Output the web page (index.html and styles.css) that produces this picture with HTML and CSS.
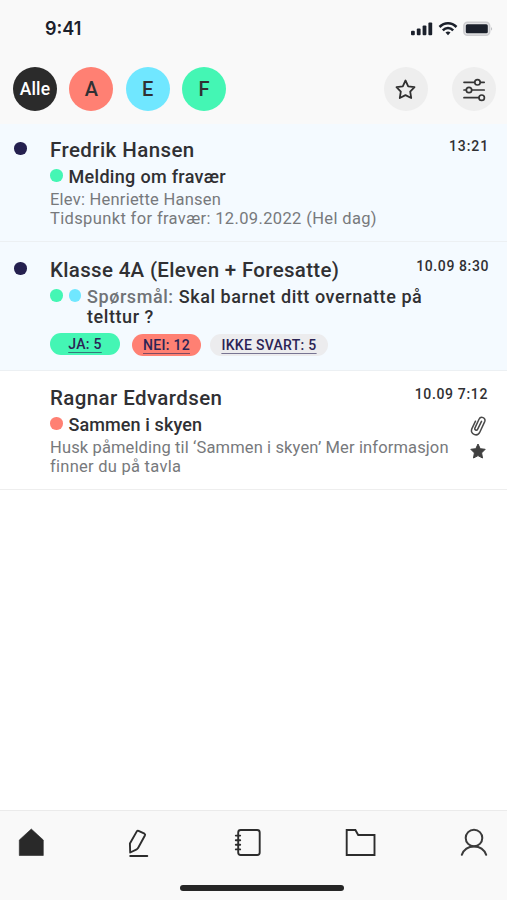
FILE: index.html
```html
<!DOCTYPE html>
<html lang="no">
<head>
<meta charset="utf-8">
<title>Meldinger</title>
<link rel="stylesheet" href="styles.css">
</head>
<body>
<div class="app">
  <header class="header">
    <div class="status">
      <span class="clock">9:41</span>
      <svg class="status-icons" width="82" height="16" viewBox="0 0 82 16">
        <g fill="#1b202b"><rect x="0" y="9.800" width="3.800" height="4.400" rx="1"/><rect x="5.800" y="7.600" width="3.800" height="6.600" rx="1"/><rect x="11.600" y="4.600" width="3.800" height="9.600" rx="1"/><rect x="17.400" y="1.400" width="3.800" height="12.800" rx="1"/></g>
        <g fill="none" stroke="#1b202b" stroke-width="2.500"><path d="M28.500 6C33.500 .9 40.500 .9 45.500 6"/><path d="M31.800 9.300C34.800 6.300 39.200 6.300 42.200 9.300"/></g>
        <path d="M34.500 11.500Q37 9.700 39.500 11.500L37 14.300Z" fill="#1b202b"/>
        <rect x="52.900" y="1.200" width="25.700" height="13" rx="3.500" fill="#e4e4e6" stroke="#cdcdd0" stroke-width="1.600"/>
        <rect x="54.800" y="3.200" width="22" height="9" rx="1.500" fill="#1b202b"/>
        <path d="M80.200 5.700Q82 7.700 80.200 9.700Z" fill="#aeb0b5"/>
      </svg>
    </div>
    <div class="filters">
      <span class="chip all">Alle</span>
      <span class="chip red">A</span>
      <span class="chip blue">E</span>
      <span class="chip green">F</span>
      <span class="round star"><svg width="44" height="44" viewBox="0 0 44 44"><path d="M21.500 13.500L24.200 19.300L30.500 20.100L26.200 24.600L27.200 31L21.500 28.100L15.800 31L16.800 24.600L12.500 20.100L18.800 19.300Z" fill="none" stroke="#303030" stroke-width="1.800" stroke-linejoin="round"/></svg></span>
      <span class="round sliders"><svg width="44" height="44" viewBox="0 0 44 44"><g fill="#eee" stroke="#353535" stroke-width="1.700" stroke-linecap="round"><path d="M12 15.300H32.200M12 23H32.200M12 30.700H32.200"/><circle cx="25.500" cy="15.300" r="2.700"/><circle cx="17" cy="23" r="2.700"/><circle cx="29.700" cy="30.700" r="2.700"/></g></svg></span>
    </div>
  </header>

  <main>
    <article class="message unread first">
      <i class="dot navy"></i>
      <div class="content">
        <div class="top"><h2 class="n1">Fredrik Hansen</h2><time class="t1">13:21</time></div>
        <div class="subject"><i class="dot green"></i><p class="s1">Melding om fravær</p></div>
        <p class="detail"><span class="d1">Elev: Henriette Hansen</span><br><span class="d2">Tidspunkt for fravær: 12.09.2022 (Hel dag)</span></p>
      </div>
    </article>
    <article class="message unread second">
      <i class="dot navy"></i>
      <div class="content">
        <div class="top"><h2 class="n2">Klasse 4A (Eleven + Foresatte)</h2><time class="t2">10.09 8:30</time></div>
        <div class="subject"><i class="dot green"></i><i class="dot blue"></i><p class="s2"><span class="label">Spørsmål:</span> Skal barnet ditt overnatte på<br>telttur ?</p></div>
        <div class="answers"><span class="pill yes"><u>JA: 5</u></span><span class="pill no"><u>NEI: 12</u></span><span class="pill none"><u>IKKE SVART: 5</u></span></div>
      </div>
    </article>
    <article class="message third">
      <i class="dot"></i>
      <div class="content">
        <div class="top"><h2 class="n3">Ragnar Edvardsen</h2><time class="t3">10.09 7:12</time></div>
        <div class="body">
          <div>
            <div class="subject"><i class="dot red"></i><p class="s3">Sammen i skyen</p></div>
            <p class="detail"><span class="d3">Husk påmelding til ‘Sammen i skyen’ Mer informasjon</span><br><span class="d4">finner du på tavla</span></p>
          </div>
          <div class="marks">
            <svg width="18" height="22" viewBox="0 0 18 22"><path d="M12.500 6.300L8.700 14.100C7.700 16.100 5.100 14.900 6 12.900L10 4.300C11.700 .5 17.300 2.900 15.700 6.600L10.900 17C8.400 22.400 .5 19.200 2.900 13.600L6.500 6.200" fill="none" stroke="#484848" stroke-width="1.500" stroke-linecap="round"/></svg>
            <svg width="18" height="18" viewBox="0 0 18 18"><path d="M9 2L11.200 6.700L16.200 7.300L12.600 10.900L13.500 16L9 13.600L4.500 16L5.400 10.900L1.800 7.300L6.800 6.700Z" fill="#404040" stroke="#404040" stroke-linejoin="round"/></svg>
          </div>
        </div>
      </div>
    </article>
  </main>

  <footer class="footer">
    <nav class="tabs">
      <svg width="32" height="32" viewBox="0 0 32 32"><path d="M16.300 3L28.300 14V29.500H4.300V14Z" fill="#292929" stroke="#292929" stroke-width=".6" stroke-linejoin="round"/></svg>
      <svg width="32" height="32" viewBox="0 0 32 32"><g fill="none" stroke="#2d2d2d" stroke-width="1.900" stroke-linecap="round" stroke-linejoin="round"><path d="M16.500 4.800L22.500 7.700Q23.500 8.300 22.900 9.500L16.200 21.700Q15.500 23 14.200 23.600L8.200 26.500L7.900 17.500L14.800 5.400Q15.500 4.300 16.500 4.800Z"/><path d="M8.200 30H25.300"/></g></svg>
      <svg width="32" height="32" viewBox="0 0 32 32"><g fill="none" stroke="#2d2d2d" stroke-width="1.900" stroke-linecap="round"><rect x="7.200" y="4" width="21.500" height="25" rx="2.500"/><path d="M4.800 9.600H9.200M4.800 14.200H9.200M4.800 18.800H9.200M4.800 23.400H9.200"/></g></svg>
      <svg width="32" height="32" viewBox="0 0 32 32"><path d="M2.700 4H11.400L14.200 9H30.500V29H2.700Z" fill="none" stroke="#2d2d2d" stroke-width="1.900"/></svg>
      <svg width="32" height="32" viewBox="0 0 32 32"><g fill="none" stroke="#3b3b3b" stroke-width="2" stroke-linecap="round"><circle cx="16" cy="12" r="8.300"/><path d="M3.800 28.800C8 17.700 24 17.700 28.200 28.800"/></g></svg>
    </nav>
    <div class="home-bar"></div>
  </footer>
</div>
</body>
</html>
```
FILE: styles.css
```css
* { box-sizing: border-box; }
body { margin: 0; background: #fff; color: #303033; font-family: Roboto, "Liberation Sans", sans-serif; }
h2, p { margin: 0; font-weight: 500; white-space: nowrap; }
svg { display: block; flex: none; }
.app { width: 507px; height: 900px; display: flex; flex-direction: column; overflow: hidden; }
.header { height: 124px; flex: none; background: #f9f9f9; padding-top: 18px; }
.status { height: 22px; display: flex; align-items: center; justify-content: space-between; padding: 0 14px 0 45px; }
.clock { font: 600 18px/22px Inter, sans-serif; color: #1b202b; }
.filters { display: flex; align-items: center; padding: 27px 11px 0 13px; }
.chip { width: 44px; height: 44px; border-radius: 50%; margin-right: 12.300px; font-size: 20px; font-weight: 500; line-height: 45px; text-align: center; }
.all { background: #2b2b2b; color: #fff; font-size: 17.500px; letter-spacing: .1px; }
.red { background: #ff8073; }
.blue { background: #70e7ff; }
.green { background: #44f6b4; }
.round { width: 44px; height: 44px; border-radius: 50%; background: #eeeeee; }
.round.star { margin-left: auto; margin-right: 24px; }
.message { display: flex; padding-left: 14px; padding-right: 18px; border-bottom: 1.500px solid #ecf0f3; }
.unread { background: #f4faff; }
.first { height: 118px; padding-top: 13px; }
.second { height: 129px; padding-top: 15px; }
.third { height: 119px; padding-top: 14px; border-color: #eeeeee; }
.dot { width: 12.500px; height: 12.500px; border-radius: 50%; flex: none; }
.navy { background: #24204f; }
.message > .dot { margin-top: 5px; margin-right: 23.500px; }
.content { flex: 1; min-width: 0; }
.top { display: flex; justify-content: space-between; height: 26px; }
h2 { font-size: 20.500px; line-height: 26px; }
time { font-size: 14px; line-height: 19px; font-weight: 500; white-space: nowrap; }
.subject { display: flex; margin-top: 4px; font-size: 18px; line-height: 19.500px; }
.subject .dot { margin: 2px 6px 0 0; }
.label { color: #707377; }
.detail { margin-top: 3px; font-size: 16.500px; line-height: 19.500px; font-weight: 400; color: #77797c; }
.n1 { letter-spacing: .42px; }
.n2 { letter-spacing: .32px; }
.n3 { letter-spacing: .4px; }
.s1 { letter-spacing: .31px; }
.s2 { letter-spacing: .57px; }
.s3 { letter-spacing: .1px; }
.d1 { letter-spacing: .23px; }
.d2 { letter-spacing: .36px; }
.d3 { letter-spacing: .13px; }
.d4 { letter-spacing: .26px; }
.t1 { letter-spacing: .9px; }
.t2 { letter-spacing: .6px; }
.t3 { letter-spacing: .65px; margin-right: 1px; }
.answers { display: flex; align-items: flex-start; margin-top: 7px; }
.pill { height: 22px; border-radius: 11px; text-align: center; font-size: 14px; line-height: 23px; font-weight: 500; letter-spacing: .3px; color: #2b2455; white-space: nowrap; }
.pill u { text-underline-offset: 3px; text-decoration-thickness: 1px; text-decoration-skip-ink: none; text-decoration-color: #2b245599; }
.yes { width: 70px; background: #44f6b4; margin-right: 12px; }
.no { width: 69px; background: #ff8073; margin: 1px 9px 0 0; }
.none { width: 118px; background: #ececee; margin-top: 1px; }
.body { display: flex; justify-content: space-between; }
.body > div:first-child { width: 400px; }
.marks { padding-top: 4px; margin-right: 2.500px; }
.marks svg + svg { margin-top: 5px; }
.footer { height: 90px; margin-top: auto; flex: none; background: #f9f9f9; border-top: 1px solid #ebebeb; }
.tabs { display: grid; grid-template-columns: 107px 109px 113px 114px 32px; padding: 14.500px 17px 0 15px; }
.home-bar { width: 164px; height: 6px; border-radius: 3px; background: #262626; margin: 27.500px auto 0 180px; }
```
